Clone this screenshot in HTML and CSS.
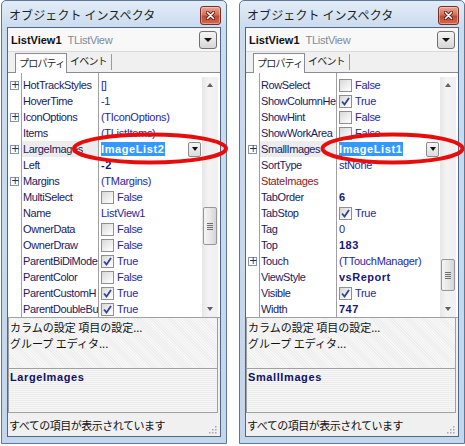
FILE: index.html
```html
<!DOCTYPE html>
<html lang="ja">
<head>
<meta charset="utf-8">
<title>オブジェクト インスペクタ</title>
<link rel="stylesheet" href="styles.css">
</head>
<body>
<div class="desk">

  <div class="win">
    <div class="titlebar">
      <span class="title">オブジェクト インスペクタ</span>
      <span class="close"><svg width="9" height="9" viewBox="0 0 9 9"><path d="M1.5 1.5L7.5 7.5M7.5 1.5L1.5 7.5" stroke="#5a1a10" stroke-width="3.2" stroke-linecap="round"/><path d="M1.5 1.5L7.5 7.5M7.5 1.5L1.5 7.5" stroke="#fff" stroke-width="1.7" stroke-linecap="round"/></svg></span>
    </div>
    <div class="client">
      <div class="combo">
        <span class="obj">ListView1</span><span class="cls">TListView</span>
        <span class="ddbtn"><i class="tri"></i></span>
      </div>
      <div class="tabs">
        <span class="tab active">プロパティ</span><span class="tab">イベント</span>
      </div>
      <div class="grid">
        <div class="rows">
          <div class="row partial"><span class="gut"></span><span class="nm"></span><span class="val"></span></div>
          <div class="row"><span class="gut"><i class="plus">+</i></span><span class="nm">HotTrackStyles</span><span class="val">[]</span></div>
          <div class="row"><span class="gut"></span><span class="nm">HoverTime</span><span class="val">-1</span></div>
          <div class="row"><span class="gut"><i class="plus">+</i></span><span class="nm">IconOptions</span><span class="val">(TIconOptions)</span></div>
          <div class="row"><span class="gut"></span><span class="nm">Items</span><span class="val">(TListItems)</span></div>
          <div class="row sel"><span class="gut"><i class="plus">+</i></span><span class="nm">LargeImages</span><span class="val edit"><span class="hl">ImageList2</span><span class="edbtn"><i class="tri"></i></span></span></div>
          <div class="row"><span class="gut"></span><span class="nm">Left</span><span class="val b">-2</span></div>
          <div class="row"><span class="gut"><i class="plus">+</i></span><span class="nm">Margins</span><span class="val">(TMargins)</span></div>
          <div class="row"><span class="gut"></span><span class="nm">MultiSelect</span><span class="val"><span class="cb"></span>False</span></div>
          <div class="row"><span class="gut"></span><span class="nm">Name</span><span class="val">ListView1</span></div>
          <div class="row"><span class="gut"></span><span class="nm">OwnerData</span><span class="val"><span class="cb"></span>False</span></div>
          <div class="row"><span class="gut"></span><span class="nm">OwnerDraw</span><span class="val"><span class="cb"></span>False</span></div>
          <div class="row"><span class="gut"></span><span class="nm">ParentBiDiMode</span><span class="val"><span class="cb"><svg width="11" height="11" viewBox="0 0 11 11"><path d="M2 5.5L4.5 8.5L9 2" fill="none" stroke="#33458e" stroke-width="1.8"/></svg></span>True</span></div>
          <div class="row"><span class="gut"></span><span class="nm">ParentColor</span><span class="val"><span class="cb"></span>False</span></div>
          <div class="row"><span class="gut"></span><span class="nm">ParentCustomH</span><span class="val"><span class="cb"><svg width="11" height="11" viewBox="0 0 11 11"><path d="M2 5.5L4.5 8.5L9 2" fill="none" stroke="#33458e" stroke-width="1.8"/></svg></span>True</span></div>
          <div class="row"><span class="gut"></span><span class="nm">ParentDoubleBu</span><span class="val"><span class="cb"><svg width="11" height="11" viewBox="0 0 11 11"><path d="M2 5.5L4.5 8.5L9 2" fill="none" stroke="#33458e" stroke-width="1.8"/></svg></span>True</span></div>
        </div>
        <div class="sb sb-left">
          <span class="arr"><i class="up"></i></span>
          <span class="pre"></span>
          <span class="thumb"><i></i><i></i><i></i><i></i></span>
          <span class="post"></span>
          <span class="arr"><i class="down"></i></span>
        </div>
      </div>
      <div class="desc">
        <div>カラムの設定 項目の設定...</div>
        <div>グループ エディタ...</div>
      </div>
      <div class="help"><b>LargeImages</b></div>
      <div class="status">
        <span class="stext">すべての項目が表示されています</span>
        <svg class="grip" width="10" height="10" viewBox="0 0 10 10"><g fill="#a8a8a8"><rect x="8" y="2" width="1.5" height="1.5"/><rect x="5" y="5" width="1.5" height="1.5"/><rect x="8" y="5" width="1.5" height="1.5"/><rect x="2" y="8" width="1.5" height="1.5"/><rect x="5" y="8" width="1.5" height="1.5"/><rect x="8" y="8" width="1.5" height="1.5"/></g></svg>
      </div>
    </div>
  </div>

  <div class="win">
    <div class="titlebar">
      <span class="title">オブジェクト インスペクタ</span>
      <span class="close"><svg width="9" height="9" viewBox="0 0 9 9"><path d="M1.5 1.5L7.5 7.5M7.5 1.5L1.5 7.5" stroke="#5a1a10" stroke-width="3.2" stroke-linecap="round"/><path d="M1.5 1.5L7.5 7.5M7.5 1.5L1.5 7.5" stroke="#fff" stroke-width="1.7" stroke-linecap="round"/></svg></span>
    </div>
    <div class="client">
      <div class="combo">
        <span class="obj">ListView1</span><span class="cls">TListView</span>
        <span class="ddbtn"><i class="tri"></i></span>
      </div>
      <div class="tabs">
        <span class="tab active">プロパティ</span><span class="tab">イベント</span>
      </div>
      <div class="grid">
        <div class="rows">
          <div class="row partial"><span class="gut"></span><span class="nm"></span><span class="val"></span></div>
          <div class="row"><span class="gut"></span><span class="nm">RowSelect</span><span class="val"><span class="cb"></span>False</span></div>
          <div class="row"><span class="gut"></span><span class="nm">ShowColumnHe</span><span class="val"><span class="cb"><svg width="11" height="11" viewBox="0 0 11 11"><path d="M2 5.5L4.5 8.5L9 2" fill="none" stroke="#33458e" stroke-width="1.8"/></svg></span>True</span></div>
          <div class="row"><span class="gut"></span><span class="nm">ShowHint</span><span class="val"><span class="cb"></span>False</span></div>
          <div class="row"><span class="gut"></span><span class="nm">ShowWorkArea</span><span class="val"><span class="cb"></span>False</span></div>
          <div class="row sel"><span class="gut"><i class="plus">+</i></span><span class="nm">SmallImages</span><span class="val edit"><span class="hl">ImageList1</span><span class="edbtn"><i class="tri"></i></span></span></div>
          <div class="row"><span class="gut"></span><span class="nm">SortType</span><span class="val">stNone</span></div>
          <div class="row"><span class="gut"></span><span class="nm ref">StateImages</span><span class="val"></span></div>
          <div class="row"><span class="gut"></span><span class="nm">TabOrder</span><span class="val b">6</span></div>
          <div class="row"><span class="gut"></span><span class="nm">TabStop</span><span class="val"><span class="cb"><svg width="11" height="11" viewBox="0 0 11 11"><path d="M2 5.5L4.5 8.5L9 2" fill="none" stroke="#33458e" stroke-width="1.8"/></svg></span>True</span></div>
          <div class="row"><span class="gut"></span><span class="nm">Tag</span><span class="val">0</span></div>
          <div class="row"><span class="gut"></span><span class="nm">Top</span><span class="val b">183</span></div>
          <div class="row"><span class="gut"><i class="plus">+</i></span><span class="nm">Touch</span><span class="val">(TTouchManager)</span></div>
          <div class="row"><span class="gut"></span><span class="nm">ViewStyle</span><span class="val b">vsReport</span></div>
          <div class="row"><span class="gut"></span><span class="nm">Visible</span><span class="val"><span class="cb"><svg width="11" height="11" viewBox="0 0 11 11"><path d="M2 5.5L4.5 8.5L9 2" fill="none" stroke="#33458e" stroke-width="1.8"/></svg></span>True</span></div>
          <div class="row"><span class="gut"></span><span class="nm">Width</span><span class="val b">747</span></div>
        </div>
        <div class="sb sb-right">
          <span class="arr"><i class="up"></i></span>
          <span class="pre"></span>
          <span class="thumb"><i></i><i></i><i></i><i></i></span>
          <span class="post"></span>
          <span class="arr"><i class="down"></i></span>
        </div>
      </div>
      <div class="desc">
        <div>カラムの設定 項目の設定...</div>
        <div>グループ エディタ...</div>
      </div>
      <div class="help"><b>SmallImages</b></div>
      <div class="status">
        <span class="stext">すべての項目が表示されています</span>
        <svg class="grip" width="10" height="10" viewBox="0 0 10 10"><g fill="#a8a8a8"><rect x="8" y="2" width="1.5" height="1.5"/><rect x="5" y="5" width="1.5" height="1.5"/><rect x="8" y="5" width="1.5" height="1.5"/><rect x="2" y="8" width="1.5" height="1.5"/><rect x="5" y="8" width="1.5" height="1.5"/><rect x="8" y="8" width="1.5" height="1.5"/></g></svg>
      </div>
    </div>
  </div>

  <svg class="marks" width="465" height="446" viewBox="0 0 465 446">
    <ellipse cx="150" cy="148.5" rx="76" ry="14" fill="none" stroke="#e80c0c" stroke-width="4"/>
    <ellipse cx="392.5" cy="148.5" rx="70" ry="14" fill="none" stroke="#e80c0c" stroke-width="4"/>
  </svg>
</div>
</body>
</html>
```

FILE: styles.css
```css
* { box-sizing: border-box; }

html, body {
  margin: 0;
  padding: 0;
  background: #ffffff;
}

.desk {
  position: relative;
  display: flex;
  gap: 12px;
  padding-left: 1px;
  font-family: "Liberation Sans", "Noto Sans CJK JP", sans-serif;
  font-size: 11px;
  color: #1a1a5e;
}

.win {
  width: 226px;
  height: 444px;
  border: 1px solid #5b7896;
  border-radius: 5px 5px 0 0;
  padding: 0 5px 5px;
  background: linear-gradient(#e2ecf7, #cbdcef 26px, #c3d6ec);
  display: flex;
  flex-direction: column;
}

.titlebar {
  height: 26px;
  display: flex;
  align-items: center;
  justify-content: space-between;
}

.title {
  margin-left: 2px;
  font-family: "Noto Sans CJK JP", sans-serif;
  font-size: 12px;
  color: #1e1e1e;
  letter-spacing: 0.1px;
}

.close {
  width: 21px;
  height: 19px;
  margin-top: 2px;
  border: 1px solid #7a2d22;
  border-radius: 3px;
  background: linear-gradient(#e9a795, #d3705c 45%, #c04a36 55%, #d06a50);
  display: flex;
  align-items: center;
  justify-content: center;
  box-shadow: inset 0 0 0 1px rgba(255,255,255,0.35);
}

.client {
  height: 410px;
  border: 1px solid #4e6785;
  background: #f0f0f0;
  display: flex;
  flex-direction: column;
}

/* object combo */
.combo {
  height: 24px;
  flex: none;
  display: flex;
  align-items: center;
  padding-left: 3px;
  background: #f8f8f8;
  border-bottom: 1px solid #d9d9d9;
}
.obj {
  font-weight: bold;
  color: #111;
}
.cls {
  margin-left: 6px;
  color: #7d8a9c;
  letter-spacing: -0.3px;
}
.ddbtn {
  margin-left: auto;
  margin-right: 3px;
  width: 18px;
  height: 18px;
  border: 1px solid #707070;
  border-radius: 3px;
  background: linear-gradient(#f4f4f4, #e6e6e6 50%, #d6d6d6);
  display: flex;
  align-items: center;
  justify-content: center;
}
.tri {
  width: 0;
  height: 0;
  border-left: 4px solid transparent;
  border-right: 4px solid transparent;
  border-top: 4px solid #111;
}

/* tabs */
.tabs {
  height: 21px;
  flex: none;
  display: flex;
  align-items: flex-end;
  padding-left: 7px;
  border-bottom: 1px solid #898c95;
  font-family: "Noto Sans CJK JP", sans-serif;
  font-size: 10px;
  letter-spacing: -0.8px;
  color: #1e1e1e;
}
.tab {
  height: 16px;
  line-height: 14px;
  padding: 0 4px 0 3px;
  border-right: 1px solid #9a9a9a;
  margin-bottom: 2px;
}
.tab.active {
  height: 20px;
  line-height: 18px;
  width: 52px;
  padding: 0 0 0 3px;
  border: 1px solid #898c95;
  border-bottom: none;
  background: #ffffff;
  margin-bottom: -1px;
}

/* property grid */
.grid {
  height: 245px;
  flex: none;
  display: flex;
  background: #ffffff;
  border-bottom: 1px solid #a0a0a0;
}
.rows {
  width: 194px;
  flex: none;
}
.row {
  height: 16px;
  display: flex;
  align-items: stretch;
  letter-spacing: -0.3px;
}
.row.partial { height: 4px; }
.gut {
  width: 14px;
  flex: none;
  border-right: 1px solid #a0a0a0;
  display: flex;
  align-items: center;
  justify-content: center;
}
.plus {
  width: 9px;
  height: 9px;
  border: 1px solid #8295b3;
  background: #fff;
  font-style: normal;
  font-size: 10px;
  line-height: 6px;
  text-align: center;
  color: #1c2d6e;
  letter-spacing: 0;
  font-family: "DejaVu Sans", sans-serif;
}
.nm {
  width: 77px;
  flex: none;
  padding-left: 1px;
  border-right: 1px solid #a0a0a0;
  white-space: nowrap;
  overflow: hidden;
  line-height: 16px;
  letter-spacing: -0.4px;
  color: #1a1a5e;
}
.nm.ref { color: #8a1c1c; }
.row.sel .nm { background: #ececec; }
.val {
  flex: 1;
  padding-left: 2px;
  display: flex;
  align-items: center;
  white-space: nowrap;
  overflow: hidden;
  color: #2626a6;
}
.val.b {
  font-weight: bold;
  color: #16167c;
  letter-spacing: 0.5px;
}
.val.edit { padding-right: 1px; }
.hl {
  background: #3399ff;
  color: #fff;
  font-weight: bold;
  line-height: 14px;
  letter-spacing: 0.6px;
  padding: 0 1px 0 0;
}
.edbtn {
  margin-left: auto;
  width: 13px;
  height: 15px;
  border: 1px solid #8a8a8a;
  border-radius: 2px;
  background: linear-gradient(#f6f6f6, #dcdcdc);
  display: flex;
  align-items: center;
  justify-content: center;
}
.edbtn .tri {
  border-left-width: 3.5px;
  border-right-width: 3.5px;
  border-top-width: 4px;
}
.cb {
  width: 13px;
  height: 13px;
  flex: none;
  margin-right: 3px;
  border: 1px solid #8f8f8f;
  background: linear-gradient(135deg, #d8d8d8, #f4f4f4 70%, #ffffff);
  display: flex;
  align-items: center;
  justify-content: center;
}

/* scrollbar */
.sb {
  width: 16px;
  height: 240px;
  margin-top: 4px;
  flex: none;
  display: flex;
  flex-direction: column;
  background: linear-gradient(90deg, #e6e6e6, #f3f3f3 40%, #f0f0f0);
}
.arr {
  height: 16px;
  flex: none;
  display: flex;
  align-items: center;
  justify-content: center;
}
.up, .down {
  width: 0;
  height: 0;
  border-left: 3.5px solid transparent;
  border-right: 3.5px solid transparent;
}
.up { border-bottom: 4px solid #606060; }
.down { border-top: 4px solid #606060; }
.thumb {
  flex: none;
  margin: 0 1px;
  border: 1px solid #979797;
  border-radius: 2px;
  background: linear-gradient(90deg, #f4f4f4, #e8e8e8 50%, #d4d4d4);
  display: flex;
  flex-direction: column;
  align-items: center;
  justify-content: center;
  gap: 1px;
}
.thumb i {
  width: 6px;
  height: 1px;
  background: #6d6d6d;
}
.sb-left .pre { height: 114px; flex: none; }
.sb-left .thumb { height: 38px; }
.sb-left .post { height: 56px; flex: none; }
.sb-right .pre { height: 166px; flex: none; }
.sb-right .thumb { height: 32px; }
.sb-right .post { height: 10px; flex: none; }

/* description & help */
.desc {
  height: 50px;
  flex: none;
  margin-right: 2px;
  padding: 1px 0 0 1px;
  border-left: 1px solid #a0a0a0;
  border-right: 1px solid #a0a0a0;
  background: repeating-linear-gradient(45deg, #f7f7f7 0 1px, #eeeeee 1px 2px);
  font-family: "Noto Sans CJK JP", sans-serif;
  font-size: 11px;
  line-height: 16px;
  color: #111;
}
.help {
  height: 45px;
  flex: none;
  margin-right: 2px;
  padding: 1px 0 0 1px;
  border: 1px solid #a0a0a0;
  background: repeating-linear-gradient(#f6f6f6 0 1px, #ececec 1px 2px);
  line-height: 14px;
}
.help b {
  color: #101060;
  letter-spacing: 0.6px;
}
.status {
  height: 23px;
  flex: none;
  display: flex;
  align-items: center;
  justify-content: space-between;
  padding: 0 3px 0 1px;
  background: #f0f0f0;
}
.stext {
  font-family: "Noto Sans CJK JP", sans-serif;
  font-size: 11px;
  letter-spacing: -0.5px;
  color: #111;
}
.grip {
  align-self: flex-end;
  margin-bottom: 2px;
}

.marks {
  position: absolute;
  left: 0;
  top: 0;
  pointer-events: none;
}
```
